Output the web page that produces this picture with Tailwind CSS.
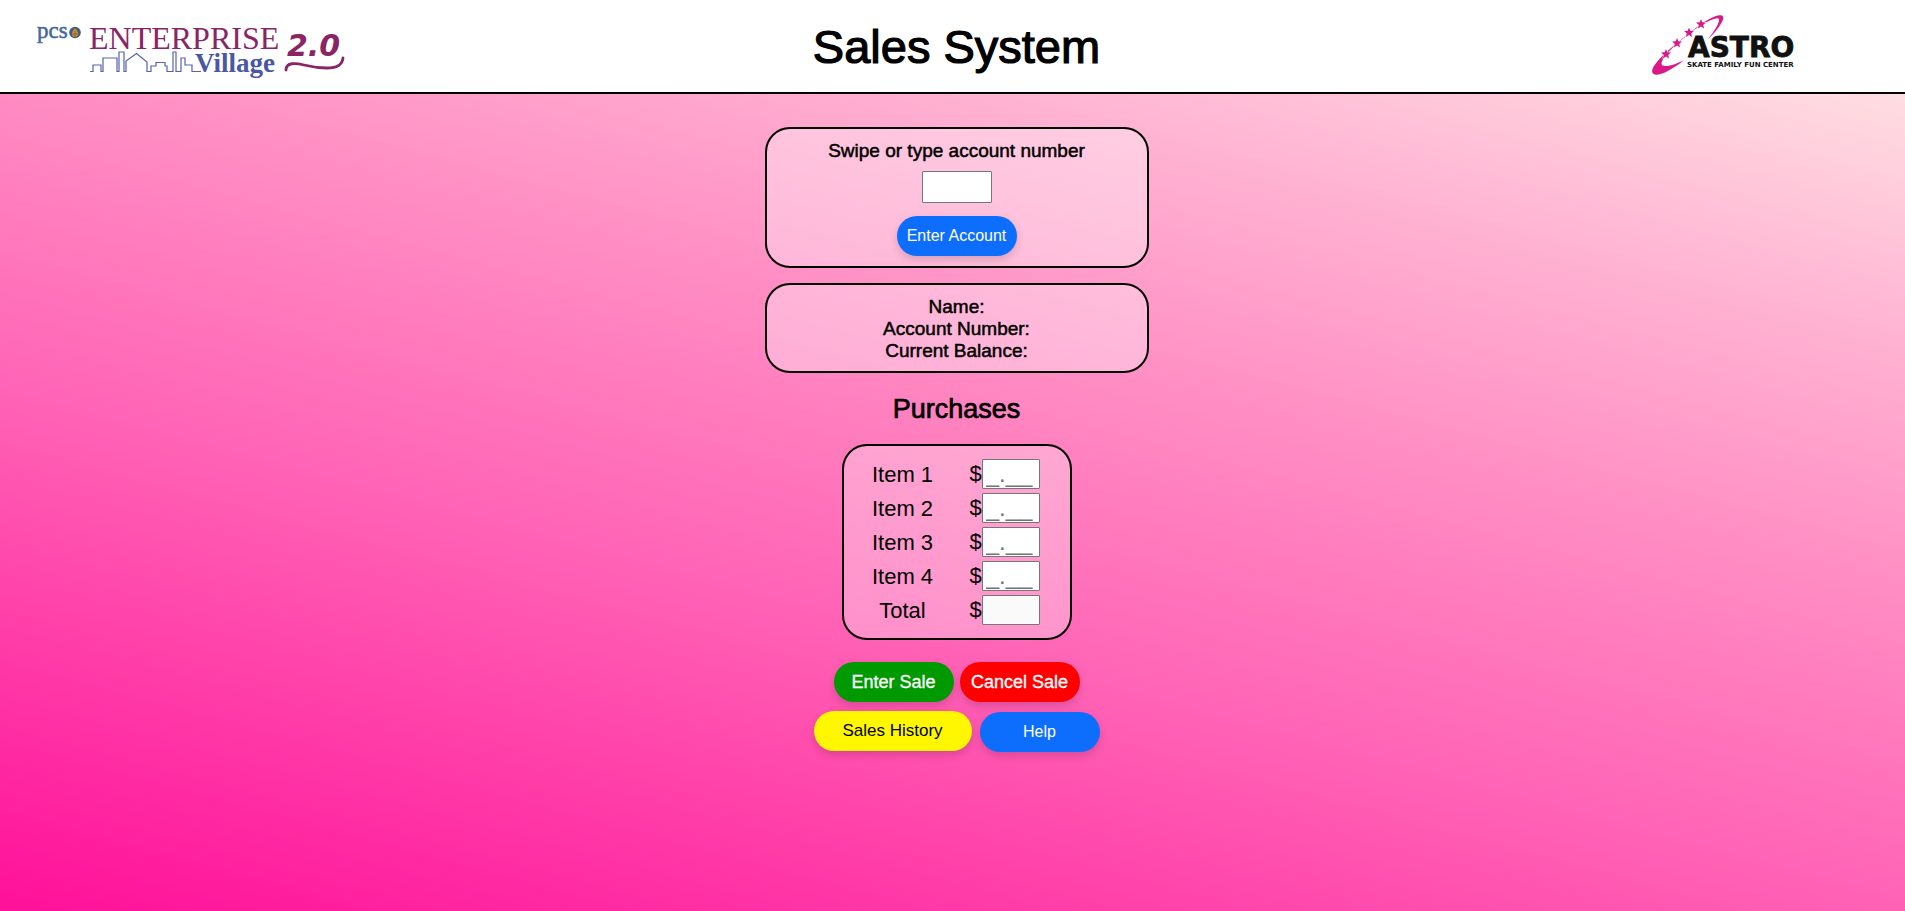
<!DOCTYPE html>
<html lang="en">
<head>
<meta charset="utf-8">
<title>Sales System</title>
<script src="https://cdn.jsdelivr.net/npm/@tailwindcss/browser@4"></script>
</head>
<body class="min-h-screen bg-[linear-gradient(15deg,#ff1099_0%,#ff62b5_36%,#ff8cc3_58%,#ffb5d3_77%,#ffe4e4_96%)] font-['Liberation_Sans',Arial,sans-serif] text-black">
<header class="grid h-[94px] grid-cols-3 items-center border-b-2 border-black bg-white">
  <svg class="ml-8 h-16 w-[320px]" viewBox="32 14 320 64" role="img" aria-label="PCS Enterprise Village 2.0">
    <g font-family="Liberation Serif, serif">
      <text x="37" y="38" font-size="23" fill="#47679b" stroke="#47679b" stroke-width=".5">pcs</text>
      <text x="89" y="49" font-size="32" fill="#8a2565">ENTERPRISE</text>
      <text x="195" y="72" font-size="27" font-weight="bold" fill="#4a56a6">Village</text>
    </g>
    <circle cx="75" cy="32.500" r="5.800" fill="#3d5f80"/>
    <path d="M75 28c-1 2-3 3-3 5.500s1 3.500 3 3.500 3-1 3-3.500-2-3.500-3-5.500z" fill="#d98a35"/>
    <path d="M72.500 34h5M75 31v6" stroke="#72602e" stroke-width=".8"/>
    <path d="M90 71.500H93V65H101V71.500H103V58H117V71.500H119V52H124V71.500H126V61L136.500 53.500L147 62V71.500H151V66H156V62.500H165V66H167V71.500H173V52H176V71.500H181V58H185V65H192V71.500H201" fill="none" stroke="#5862ac" stroke-width="1.200"/>
    <text x="287" y="56" font-family="DejaVu Sans, sans-serif" font-size="30" font-weight="bold" font-style="italic" fill="#8a2565">2.0</text>
    <path d="M286 70C286 62 296 63 304 65S318 68 327 68C336 68 342 66 343 58" fill="none" stroke="#8a2565" stroke-width="2.800" stroke-linecap="round"/>
  </svg>
  <h1 class="pt-0.5 pl-2 text-center text-[47px] leading-[52px] [-webkit-text-stroke:1.2px_black]">Sales System</h1>
  <svg class="mr-[102px] h-[66px] w-[154px] justify-self-end" viewBox="1649 13 154 66" role="img" aria-label="Astro Skate Family Fun Center">
    <path d="M1708 39C1716 32 1725 20 1723 16.500C1720 12 1704 21 1692 31C1674 45 1657 59 1652.500 69C1650 77 1660 75 1666 72C1673 68 1680 64 1684 60C1676 64 1666 68 1662 65C1659 61 1672 47 1685 37C1698 26 1714 17 1718.500 18.500C1721 21 1714 32 1708 39Z" fill="#d9188a"/>
    <g stroke="#fff" stroke-width="1" fill="#d9188a" paint-order="stroke">
      <path id="star" d="M1701 19l1.300 3.300 3.600.3-2.700 2.300.9 3.500-3.100-1.900-3.100 1.900.9-3.500-2.700-2.300 3.600-.3z"/>
      <use href="#star" x="-12" y="8.500"/>
      <use href="#star" x="-24" y="19"/>
      <use href="#star" x="-35" y="30"/>
    </g>
    <g font-family="DejaVu Sans, sans-serif" font-weight="bold" fill="#111">
      <text x="1688" y="57" font-size="28" stroke="#111" stroke-width=".8">ASTRO</text>
      <text x="1687" y="67" font-size="7">SKATE FAMILY FUN CENTER</text>
    </g>
  </svg>
</header>

<main class="flex flex-col items-center pt-[33px] pl-2">
  <form class="flex w-96 flex-col items-center rounded-[25px] border-2 border-black bg-white/35 pt-[11px] pb-2.5">
    <label for="account" class="text-[19px] leading-[22px] [-webkit-text-stroke:0.5px_black]">Swipe or type account number</label>
    <input id="account" type="text" class="mt-[9px] h-8 w-[70px] rounded-[1px] border border-[#767676] bg-white px-1">
    <button type="button" class="mt-[13px] h-10 w-[120px] rounded-full bg-[#0d6efd] text-base text-white shadow-[0_4px_8px_rgba(0,0,0,0.15)]">Enter Account</button>
  </form>

  <section class="mt-[15px] w-96 rounded-[25px] border-2 border-black bg-white/35 pt-[11px] pb-[9px] text-center text-[19px] leading-[22px] [-webkit-text-stroke:0.5px_black]">
    <p>Name:</p>
    <p>Account Number:</p>
    <p>Current Balance:</p>
  </section>

  <h2 class="mt-5 text-[27px] leading-8 [-webkit-text-stroke:0.7px_black]">Purchases</h2>

  <form class="mt-[19px] w-[230px] rounded-[25px] border-2 border-black bg-white/30 pt-[13px] pb-[11px] pl-7 text-[22px]">
    <div class="flex h-[34px] items-start"><label for="item1" class="w-[62px] text-center leading-8">Item 1</label><span class="ml-9 leading-[30px]">$</span><input id="item1" type="text" placeholder="_.__" class="h-[30px] w-[58px] rounded-[1px] border border-[#767676] bg-white px-[3px] text-2xl leading-7 placeholder:text-[#757575]"></div>
    <div class="flex h-[34px] items-start"><label for="item2" class="w-[62px] text-center leading-8">Item 2</label><span class="ml-9 leading-[30px]">$</span><input id="item2" type="text" placeholder="_.__" class="h-[30px] w-[58px] rounded-[1px] border border-[#767676] bg-white px-[3px] text-2xl leading-7 placeholder:text-[#757575]"></div>
    <div class="flex h-[34px] items-start"><label for="item3" class="w-[62px] text-center leading-8">Item 3</label><span class="ml-9 leading-[30px]">$</span><input id="item3" type="text" placeholder="_.__" class="h-[30px] w-[58px] rounded-[1px] border border-[#767676] bg-white px-[3px] text-2xl leading-7 placeholder:text-[#757575]"></div>
    <div class="flex h-[34px] items-start"><label for="item4" class="w-[62px] text-center leading-8">Item 4</label><span class="ml-9 leading-[30px]">$</span><input id="item4" type="text" placeholder="_.__" class="h-[30px] w-[58px] rounded-[1px] border border-[#767676] bg-white px-[3px] text-2xl leading-7 placeholder:text-[#757575]"></div>
    <div class="flex h-8 items-start"><label for="total" class="w-[62px] text-center leading-8">Total</label><span class="ml-9 leading-[30px]">$</span><input id="total" type="text" readonly class="h-[30px] w-[58px] rounded-[1px] border border-[#767676] bg-[#fafafa] px-[3px] text-2xl leading-7"></div>
  </form>

  <div class="mt-[22px] flex gap-1.5">
    <button type="button" class="h-10 w-[120px] rounded-full bg-[#009900] text-lg text-white shadow-[0_4px_8px_rgba(0,0,0,0.15)] [-webkit-text-stroke:0.3px_white]">Enter Sale</button>
    <button type="button" class="h-10 w-[120px] rounded-full bg-[#ff0000] text-lg text-white shadow-[0_4px_8px_rgba(0,0,0,0.15)] [-webkit-text-stroke:0.3px_white]">Cancel Sale</button>
  </div>
  <div class="mt-[9px] flex gap-2">
    <button type="button" class="h-10 w-[158px] rounded-full bg-[#fff700] text-[17px] text-black shadow-[0_4px_8px_rgba(0,0,0,0.15)]">Sales History</button>
    <button type="button" class="mt-px h-10 w-[120px] rounded-full bg-[#0d6efd] text-base text-white shadow-[0_4px_8px_rgba(0,0,0,0.15)]">Help</button>
  </div>
</main>
</body>
</html>
